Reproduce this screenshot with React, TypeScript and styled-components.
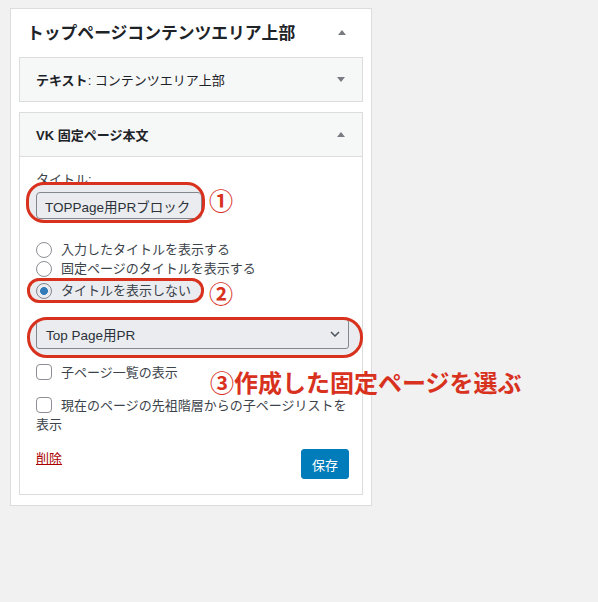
import styled, { createGlobalStyle } from "styled-components";

const GlobalStyle = createGlobalStyle`
    body {
        margin: 0;
        background: #f1f1f1;
        font-family: "Liberation Sans", "Noto Sans CJK JP", sans-serif;
        color: #3c434a;
    }
`;

const Page = styled.div`
    padding: 8px 0 0 10px;
`;

const Panel = styled.section`
    width: 362px;
    box-sizing: border-box;
    background: #fff;
    border: 1px solid #dcdcde;
    padding: 0 8px 10px;
`;

const PanelHeader = styled.div`
    height: 48px;
    box-sizing: border-box;
    padding: 0 17px 2px 8px;
    display: flex;
    align-items: center;
    justify-content: space-between;
`;

const PanelTitle = styled.h2`
    margin: 0;
    font-size: 16.8px;
    font-weight: 700;
    color: #1d2327;
`;

const Caret = styled.span<{ $down?: boolean }>`
    width: 0;
    height: 0;
    border-left: 4px solid transparent;
    border-right: 4px solid transparent;
    ${p => (p.$down ? "border-top: 5px solid #787c82;" : "border-bottom: 5px solid #787c82;")}
`;

const Widget = styled.div`
    border: 1px solid #dcdcde;
    background: #fff;
    & + & {
        margin-top: 10px;
    }
`;

const WidgetHeader = styled.div<{ $open?: boolean }>`
    height: 43px;
    padding: 0 17px 0 16px;
    display: flex;
    align-items: center;
    justify-content: space-between;
    background: #f6f7f7;
    ${p => p.$open && "border-bottom: 1px solid #dcdcde;"}
`;

const WidgetTitle = styled.h3`
    margin: 0;
    font-size: 13px;
    font-weight: 700;
    color: #1d2327;
`;

const InTitle = styled.span`
    font-weight: 400;
`;

const WidgetBody = styled.div`
    position: relative;
    padding: 13px 13px 15px 16px;
    font-size: 13px;
`;

const FieldLabel = styled.div`
    line-height: 19px;
`;

const TitleInput = styled.input`
    display: block;
    margin-top: 3px;
    width: 166px;
    height: 27px;
    box-sizing: border-box;
    padding: 0 8px;
    border: 1px solid #8c8f94;
    border-radius: 4px;
    background: #fff;
    font-family: inherit;
    font-size: 13.5px;
    color: #2c3338;
`;

const RadioGroup = styled.div`
    margin-top: 21px;
    display: flex;
    flex-direction: column;
`;

const RadioRow = styled.label<{ $gap?: number }>`
    height: 19px;
    margin-top: ${p => p.$gap ?? 0}px;
    display: flex;
    align-items: center;
    gap: 9px;
    line-height: 19px;
`;

const Radio = styled.input`
    appearance: none;
    margin: 0;
    width: 16px;
    height: 16px;
    border: 1px solid #8c8f94;
    border-radius: 50%;
    background: #fff;
    &:checked {
        background: radial-gradient(circle, #3582c4 0 3.6px, #fff 4.2px);
    }
`;

const SelectBox = styled.div`
    margin-top: 19px;
    height: 30px;
    box-sizing: border-box;
    padding: 0 8px 0 9px;
    display: flex;
    align-items: center;
    justify-content: space-between;
    border: 1px solid #8c8f94;
    border-radius: 3px;
    background: #fff;
    font-size: 13.5px;
    color: #2c3338;
`;

const CheckRow = styled.label`
    display: block;
    margin-top: 14px;
    line-height: 19px;
`;

const Checkbox = styled.input`
    appearance: none;
    display: inline-block;
    vertical-align: -3px;
    margin: 0 9px 0 0;
    width: 16px;
    height: 16px;
    border: 1px solid #8c8f94;
    border-radius: 4px;
    background: #fff;
`;

const Footer = styled.div`
    margin-top: 15px;
    display: flex;
    justify-content: space-between;
    align-items: flex-start;
`;

const DeleteLink = styled.a`
    color: #a00;
    line-height: 19px;
    text-decoration: underline;
`;

const SaveButton = styled.button`
    width: 48px;
    height: 30px;
    padding: 0;
    border: 1px solid #007cba;
    border-radius: 3px;
    background: #007cba;
    color: #fff;
    font-family: inherit;
    font-size: 13px;
`;

const Mark = styled.div<{ $x: number; $y: number; $w: number; $h: number; $r: number }>`
    position: absolute;
    left: ${p => p.$x}px;
    top: ${p => p.$y}px;
    width: ${p => p.$w}px;
    height: ${p => p.$h}px;
    box-sizing: border-box;
    border: 3px solid #d8321f;
    border-radius: ${p => p.$r}px;
    background: rgba(30, 40, 80, 0.09);
    pointer-events: none;
`;

const Note = styled.span<{ $x: number; $y: number }>`
    position: absolute;
    left: ${p => p.$x}px;
    top: ${p => p.$y}px;
    color: #d8321f;
    font-family: "Noto Sans CJK JP", sans-serif;
    font-size: 24px;
    font-weight: 700;
    line-height: 24px;
    white-space: nowrap;
`;

function Chevron() {
    return (
        <svg width="10" height="6" viewBox="0 0 10 6" fill="none">
            <path d="M1 1l4 4 4-4" stroke="#50575e" strokeWidth="1.5" />
        </svg>
    );
}

export default function App() {
    return (
        <Page>
            <GlobalStyle />
            <Panel>
                <PanelHeader>
                    <PanelTitle>トップページコンテンツエリア上部</PanelTitle>
                    <Caret />
                </PanelHeader>

                <Widget>
                    <WidgetHeader>
                        <WidgetTitle>
                            テキスト<InTitle>: コンテンツエリア上部</InTitle>
                        </WidgetTitle>
                        <Caret $down />
                    </WidgetHeader>
                </Widget>

                <Widget>
                    <WidgetHeader $open>
                        <WidgetTitle>VK 固定ページ本文</WidgetTitle>
                        <Caret />
                    </WidgetHeader>
                    <WidgetBody>
                        <FieldLabel>タイトル:</FieldLabel>
                        <TitleInput defaultValue="TOPPage用PRブロック" />

                        <RadioGroup>
                            <RadioRow>
                                <Radio type="radio" name="title" />
                                入力したタイトルを表示する
                            </RadioRow>
                            <RadioRow>
                                <Radio type="radio" name="title" />
                                固定ページのタイトルを表示する
                            </RadioRow>
                            <RadioRow $gap={3}>
                                <Radio type="radio" name="title" defaultChecked />
                                タイトルを表示しない
                            </RadioRow>
                        </RadioGroup>

                        <SelectBox>
                            <span>Top Page用PR</span>
                            <Chevron />
                        </SelectBox>

                        <CheckRow>
                            <Checkbox type="checkbox" />
                            子ページ一覧の表示
                        </CheckRow>
                        <CheckRow>
                            <Checkbox type="checkbox" />
                            現在のページの先祖階層からの子ページリストを表示
                        </CheckRow>

                        <Footer>
                            <DeleteLink href="#">削除</DeleteLink>
                            <SaveButton>保存</SaveButton>
                        </Footer>

                        <Mark $x={6} $y={25} $w={179} $h={41} $r={18} />
                        <Note $x={189} $y={31}>①</Note>
                        <Mark $x={7} $y={121} $w={177} $h={25} $r={12} />
                        <Note $x={189} $y={124}>②</Note>
                        <Mark $x={7} $y={160} $w={336} $h={41} $r={20} />
                        <Note $x={190} $y={213}>③作成した固定ページを選ぶ</Note>
                    </WidgetBody>
                </Widget>
            </Panel>
        </Page>
    );
}
